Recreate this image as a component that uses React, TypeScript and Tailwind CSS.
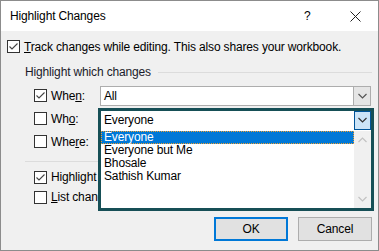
import React from "react";

const Check = ({ checked }: { checked: boolean }) => (
  <div className="w-[13px] h-[13px] shrink-0 border border-[#333333] bg-white flex items-center justify-center">
    {checked && (
      <svg width="11" height="11" viewBox="0 0 11 11">
        <path d="M1.5 5.5 L4 8 L9.5 2.5" fill="none" stroke="#444444" strokeWidth="1.1" />
      </svg>
    )}
  </div>
);

const Chevron = ({ up = false, color = "#333333" }: { up?: boolean; color?: string }) => (
  <svg width="9" height="6" viewBox="0 0 9 6">
    <path d={up ? "M0.5 5 L4.5 1 L8.5 5" : "M0.5 1 L4.5 5 L8.5 1"} fill="none" stroke={color} strokeWidth="1.2" />
  </svg>
);

const people = ["Everyone", "Everyone but Me", "Bhosale", "Sathish Kumar"];

export default function App() {
  return (
    <div
      className="w-[379px] h-[251px] border border-[#8c8c8c] bg-[#f0f0f0] flex flex-col text-[12px] text-black leading-none tracking-[-0.15px]"
      style={{ fontFamily: '"Liberation Sans", Arial, sans-serif' }}
    >
      {/* title bar */}
      <div className="h-[30px] bg-white flex items-center shrink-0">
        <span className="ml-[9px] text-[12px] flex-1">Highlight Changes</span>
        <span className="w-[10px] text-[12px] mr-[36px]">?</span>
        <svg width="11" height="11" viewBox="0 0 11 11" className="mr-[17px]">
          <path d="M0.5 0.5 L10.5 10.5 M10.5 0.5 L0.5 10.5" stroke="#222" strokeWidth="1" />
        </svg>
      </div>

      {/* body */}
      <div className="flex flex-col pt-[6px]">
        <div className="h-[19px] flex items-center pl-[6px] gap-[4px]">
          <Check checked />
          <span>
            <u>T</u>rack changes while editing. This also shares your workbook.
          </span>
        </div>

        <div className="h-[18px] mt-[7px] flex items-center pl-[24px] pr-[6px] gap-[7px]">
          <span className="text-[#1a1a2a]">Highlight which changes</span>
          <div className="flex-1 h-px bg-[#dcdcdc]" />
        </div>

        <div className="flex flex-col mt-[3px] pl-[33px]">
          <div className="h-[23px] flex items-center">
            <Check checked />
            <span className="ml-[4px] w-[49px]">
              Whe<u>n</u>:
            </span>
            <div className="w-[271px] h-[20px] bg-white border border-[#adadad] flex items-center">
              <span className="pl-[3px] flex-1">All</span>
              <div className="w-[17px] h-[18px] bg-[#e5e5e5] border-l border-[#adadad] flex items-center justify-center">
                <Chevron color="#555555" />
              </div>
            </div>
          </div>

          <div className="h-[23px] flex items-center">
            <Check checked={false} />
            <span className="ml-[4px] w-[49px]">
              Wh<u>o</u>:
            </span>
            <div className="relative w-[271px] h-[20px]">
              {/* open dropdown */}
              <div className="absolute left-[-2px] top-[-1px] w-[276px] h-[103px] border-[3px] border-[#164f56] bg-white flex flex-col z-10">
                <div className="h-[19px] flex items-center shrink-0">
                  <span className="pl-[3px] flex-1">Everyone</span>
                  <div className="w-[17px] h-[19px] bg-[#cce4f7] border border-[#005499] flex items-center justify-center">
                    <Chevron color="#333333" />
                  </div>
                </div>
                <div className="flex flex-1 mt-px">
                  <div className="flex-1 flex flex-col">
                    {people.map((p, i) => (
                      <div
                        key={p}
                        className={
                          i === 0
                            ? "h-[13px] flex items-center pl-[2px] bg-[#0078d7] text-white border border-dotted border-[#f0a030]"
                            : "h-[13px] flex items-center pl-[3px]"
                        }
                      >
                        {p}
                      </div>
                    ))}
                  </div>
                  <div className="w-[17px] bg-[#f0f0f0] flex flex-col items-center justify-between py-[6px]">
                    <Chevron up color="#c2c2c2" />
                    <Chevron color="#c2c2c2" />
                  </div>
                </div>
              </div>
            </div>
          </div>

          <div className="h-[23px] flex items-center">
            <Check checked={false} />
            <span className="ml-[4px]">
              Whe<u>r</u>e:
            </span>
          </div>
        </div>

        <div className="h-px bg-[#dcdcdc] ml-[24px] mr-[6px] mt-[8px]" />

        <div className="flex flex-col pl-[33px] mt-[5px]">
          <div className="h-[20px] flex items-center gap-[4px]">
            <Check checked />
            <span className="whitespace-nowrap">Highlight changes on screen</span>
          </div>
          <div className="h-[20px] flex items-center gap-[4px]">
            <Check checked={false} />
            <span className="whitespace-nowrap">
              <u>L</u>ist changes on a new sheet
            </span>
          </div>
        </div>

        <div className="flex justify-end gap-[10px] pr-[6px] mt-[10px]">
          <button className="w-[74px] h-[24px] bg-[#e1e1e1] border-2 border-[#0078d7] text-[12px]">OK</button>
          <button className="w-[74px] h-[24px] bg-[#e1e1e1] border border-[#adadad] text-[12px]">Cancel</button>
        </div>
      </div>
    </div>
  );
}
